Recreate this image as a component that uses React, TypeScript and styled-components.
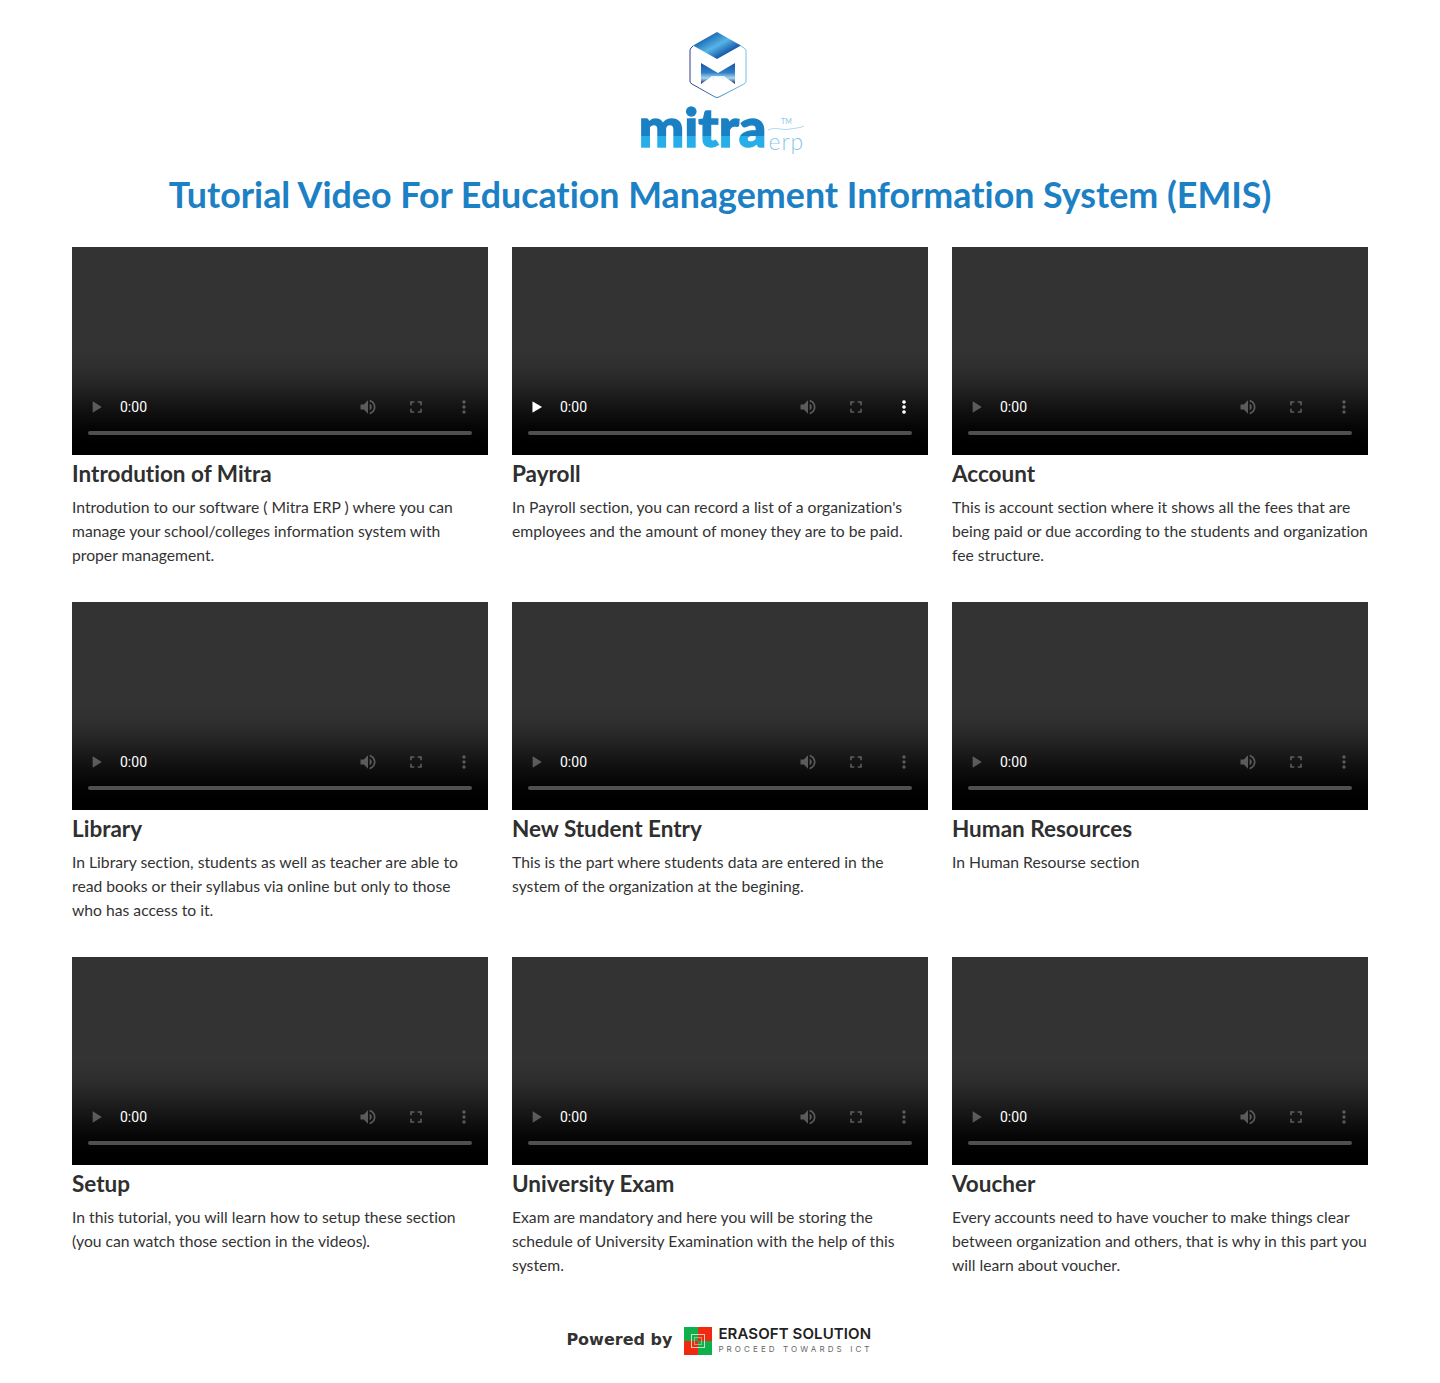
import styled, { createGlobalStyle } from "styled-components";

const tutorials = [
  {
    title: "Introdution of Mitra",
    lines: ["Introdution to our software ( Mitra ERP ) where you can", "manage your school/colleges information system with", "proper management."],
  },
  {
    title: "Payroll",
    lines: ["In Payroll section, you can record a list of a organization's", "employees and the amount of money they are to be paid."],
    active: true,
  },
  {
    title: "Account",
    lines: ["This is account section where it shows all the fees that are", "being paid or due according to the students and organization", "fee structure."],
  },
  {
    title: "Library",
    lines: ["In Library section, students as well as teacher are able to", "read books or their syllabus via online but only to those", "who has access to it."],
  },
  {
    title: "New Student Entry",
    lines: ["This is the part where students data are entered in the", "system of the organization at the begining."],
  },
  { title: "Human Resources", lines: ["In Human Resourse section"] },
  {
    title: "Setup",
    lines: ["In this tutorial, you will learn how to setup these section", "(you can watch those section in the videos)."],
  },
  {
    title: "University Exam",
    lines: ["Exam are mandatory and here you will be storing the", "schedule of University Examination with the help of this", "system."],
  },
  {
    title: "Voucher",
    lines: ["Every accounts need to have voucher to make things clear", "between organization and others, that is why in this part you", "will learn about voucher."],
  },
];

const App = () => {
  return (
    <Page>
      <GlobalStyle />
      <LogoMark viewBox="0 0 60 72" aria-hidden="true">
        <defs>
          <linearGradient id="roof" x1="0" y1="0" x2="1" y2="1">
            <stop offset="0" stopColor="#1a56a4" />
            <stop offset="0.25" stopColor="#1f6fb8" />
            <stop offset="0.5" stopColor="#58b4e6" />
            <stop offset="0.72" stopColor="#1c62ae" />
            <stop offset="1" stopColor="#123a86" />
          </linearGradient>
          <linearGradient id="letter" x1="0" y1="0" x2="0" y2="1">
            <stop offset="0" stopColor="#1a55a6" />
            <stop offset="0.45" stopColor="#2f7fc6" />
            <stop offset="0.72" stopColor="#a8d6ee" />
            <stop offset="1" stopColor="#10285e" />
          </linearGradient>
          <linearGradient id="edge" x1="0" y1="0" x2="1" y2="0">
            <stop offset="0" stopColor="#2a3f8c" />
            <stop offset="1" stopColor="#6fc4e4" />
          </linearGradient>
        </defs>
        <path
          d="M6 16 L4 18 Q3 19 3 21 V51 Q3 53 5 54 L28 67 Q30 68 32 67 L57 54 Q59 53 59 51 V21 Q59 19 57 18 L54 16"
          fill="none"
          stroke="url(#edge)"
          strokeWidth="1"
        />
        <path d="M30 2 L54 15.5 L30 29 L6 15.5 Z" fill="url(#roof)" />
        <path d="M14 33 L31 43 L48 33 V54 L38 47 H24 L14 54 Z" fill="url(#letter)" />
        <path d="M24 46 H38 L36 50 H35 V47.5 H27 V50 H26 Z" fill="#e8f4fb" />
      </LogoMark>
      <Wordmark>
        <Mitra>mitra</Mitra>
        <ErpBlock>
          <Tm>TM</Tm>
          <Swoosh viewBox="0 0 36 5" aria-hidden="true">
            <path d="M0 4 C8 0 14 5 22 3 C28 2 32 2 36 0" fill="none" stroke="#8cc8ea" strokeWidth="0.7" />
          </Swoosh>
          <Erp>erp</Erp>
        </ErpBlock>
      </Wordmark>
      <PageTitle>Tutorial Video For Education Management Information System (EMIS)</PageTitle>
      <Grid>
        {tutorials.map((item) => (
          <Card key={item.title}>
            <PlayerFrame>
              <Player controls />
              {item.active && (
                <ActiveControls viewBox="0 0 416 208" aria-hidden="true">
                  <path d="M20.5 154.5 L30 160 L20.5 165.5 Z" fill="#fff" />
                  <circle cx="392" cy="155" r="1.8" fill="#fff" />
                  <circle cx="392" cy="160" r="1.8" fill="#fff" />
                  <circle cx="392" cy="165" r="1.8" fill="#fff" />
                </ActiveControls>
              )}
            </PlayerFrame>
            <CardTitle>{item.title}</CardTitle>
            <CardText>
              {item.lines.map((line) => (
                <TextLine key={line}>{line}</TextLine>
              ))}
            </CardText>
          </Card>
        ))}
      </Grid>
      <Footer>
        <PoweredBy>Powered by</PoweredBy>
        <FooterMark viewBox="0 0 28 28" aria-hidden="true">
          <rect width="14" height="14" fill="#0fb04b" />
          <rect x="14" width="14" height="14" fill="#ee2a10" />
          <rect y="14" width="14" height="14" fill="#ee2a10" />
          <rect x="14" y="14" width="14" height="14" fill="#0fb04b" />
          <rect x="7.5" y="7.5" width="13" height="13" fill="none" stroke="#f3e6d6" strokeWidth="1" opacity="0.85" />
          <rect x="10.5" y="10.5" width="7" height="7" fill="none" stroke="#f3e6d6" strokeWidth="1" opacity="0.5" />
        </FooterMark>
        <Brand>
          <BrandName>ERASOFT SOLUTION</BrandName>
          <BrandTag>PROCEED TOWARDS ICT</BrandTag>
        </Brand>
      </Footer>
    </Page>
  );
};

const GlobalStyle = createGlobalStyle`
  body {
    margin: 0;
    background: #fff;
    font-family: "Lato", sans-serif;
    font-variant-ligatures: none;
  }
`;

const Page = styled.div`
  display: flex;
  flex-direction: column;
  align-items: center;
  padding: 30px 72px 0;
`;

const LogoMark = styled.svg`
  width: 60px;
  height: 72px;
  margin-right: 6px;
`;

const Wordmark = styled.div`
  display: flex;
  align-items: flex-end;
  height: 48px;
  margin-top: 1px;
  margin-left: 3px;
`;

const Mitra = styled.span`
  font-family: "Lato", sans-serif;
  font-weight: 900;
  font-size: 54px;
  line-height: 48px;
  background: linear-gradient(#1a80c4 68%, #25aee8 68%);
  -webkit-background-clip: text;
  background-clip: text;
  color: transparent;
  -webkit-text-stroke: 1.4px transparent;
`;

const ErpBlock = styled.div`
  display: flex;
  flex-direction: column;
  align-items: center;
  width: 36px;
  margin-left: 2px;
  color: #8cc8ea;
`;

const Tm = styled.span`
  font-size: 7px;
  line-height: 9px;
`;

const Swoosh = styled.svg`
  width: 36px;
  height: 5px;
`;

const Erp = styled.span`
  font-size: 23px;
  font-weight: 300;
  line-height: 20px;
  letter-spacing: 1px;
`;

const PageTitle = styled.h1`
  margin: 20px 0 0;
  font-size: 35.8px;
  line-height: 48px;
  font-weight: 700;
  color: #1b80c4;
  text-align: center;
`;

const Grid = styled.div`
  display: grid;
  grid-template-columns: repeat(3, 416px);
  column-gap: 24px;
  row-gap: 35px;
  margin-top: 28px;
`;

const Card = styled.div`
  display: flex;
  flex-direction: column;
`;

const PlayerFrame = styled.div`
  position: relative;
  width: 416px;
  height: 208px;
`;

const Player = styled.video`
  display: block;
  width: 416px;
  height: 208px;
`;

const ActiveControls = styled.svg`
  position: absolute;
  inset: 0;
  pointer-events: none;
`;

const CardTitle = styled.h4`
  margin: 5px 0 7px;
  font-size: 22.5px;
  line-height: 28px;
  font-weight: 700;
  color: #2f2f2f;
`;

const CardText = styled.p`
  margin: 0;
  font-size: 15.7px;
  line-height: 24px;
  color: #333;
`;

const TextLine = styled.span`
  display: block;
  white-space: nowrap;
`;

const Footer = styled.div`
  display: flex;
  align-items: center;
  margin-top: 49px;
  height: 30px;
  margin-left: -1px;
`;

const PoweredBy = styled.span`
  font-family: "DejaVu Sans", sans-serif;
  font-size: 16px;
  font-weight: 700;
  color: #333;
  margin-bottom: 4px;
`;

const FooterMark = styled.svg`
  width: 28px;
  height: 28px;
  margin-left: 12px;
`;

const Brand = styled.div`
  display: flex;
  flex-direction: column;
  gap: 4px;
  margin-left: 6px;
  margin-bottom: 2px;
`;

const BrandName = styled.span`
  font-family: "Inter", sans-serif;
  font-size: 15px;
  line-height: 15px;
  font-weight: 600;
  letter-spacing: 0.1px;
  color: #222;
`;

const BrandTag = styled.span`
  font-family: "Inter", sans-serif;
  font-size: 8px;
  line-height: 9px;
  letter-spacing: 3.1px;
  color: #666;
`;

export default App;
